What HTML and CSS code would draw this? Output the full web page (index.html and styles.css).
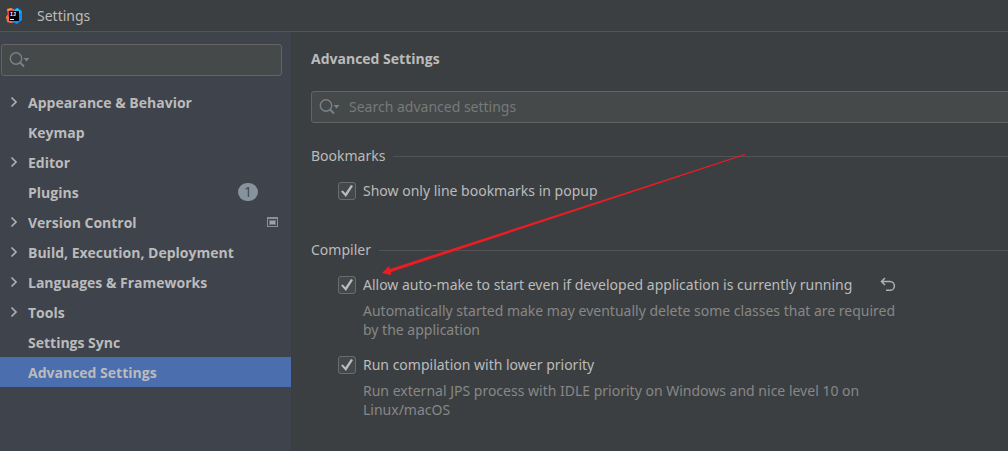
FILE: index.html
```html
<!DOCTYPE html>
<html lang="en">
<head>
<meta charset="utf-8">
<meta name="viewport" content="width=device-width, initial-scale=1">
<title>Settings</title>
<link rel="stylesheet" href="styles.css">
</head>
<body>
<svg class="defs" aria-hidden="true">
  <symbol id="chevron" viewBox="0 0 8 12"><path d="M1.5 1.5 6 6 1.5 10.5" fill="none" stroke="currentColor" stroke-width="1.7"/></symbol>
  <symbol id="search" viewBox="0 0 22 18"><circle cx="7" cy="7.5" r="5.7" fill="none" stroke="currentColor" stroke-width="1.4"/><path d="m11 11.5 4 4" stroke="currentColor" stroke-width="1.8"/><path d="M14.5 7h6l-3 3.5z" fill="currentColor"/></symbol>
</svg>
<header class="titlebar">
  <svg class="logo" viewBox="0 0 16 16" aria-hidden="true">
    <path d="M1 1 5 0l4 2-5 6-3 5-1-4 2-3z" fill="#f7a32b"/>
    <path d="m2 3 5-2 2 4-5 8-3 1z" fill="#f0316d"/>
    <path d="m1 9 4-1 4 6-4 1-4-1z" fill="#fc6a55"/>
    <path d="m9 1 3-1 4 3v9l-5 4-5-2z" fill="#0d8cf5"/>
    <path d="m11 0 4 4-2 2-5-3z" fill="#22c4f5"/>
    <path d="M3 3h10v10H3z" fill="#080008"/>
    <text class="logo-text" x="4" y="8">IJ</text>
    <path d="M4 11.5h4" stroke="#fff"/>
  </svg>
  <span>Settings</span>
</header>
<div class="body">
  <nav class="sidebar" aria-label="Settings categories">
    <label class="search side-search"><svg class="search-icon" aria-hidden="true"><use href="#search"/></svg><input type="search" aria-label="Search settings"></label>
    <ul class="tree">
      <li><a class="row" href="#"><svg class="chevron"><use href="#chevron"/></svg><span class="name">Appearance &amp; Behavior</span></a></li>
      <li><a class="row" href="#"><span class="name">Keymap</span></a></li>
      <li><a class="row" href="#"><svg class="chevron"><use href="#chevron"/></svg><span class="name">Editor</span></a></li>
      <li><a class="row" href="#"><span class="name">Plugins</span><span class="badge">1</span></a></li>
      <li><a class="row" href="#"><svg class="chevron"><use href="#chevron"/></svg><span class="name">Version Control</span><svg class="project" viewBox="0 0 11 10"><path fill="#87939a" fill-rule="evenodd" d="M0 0h11v10H0zM1 2v7h9V2z"/><path fill="#6b767e" d="M2 3h7v5H2z"/><path fill="#99a5ad" d="M3 4h5v3H3z"/></svg></a></li>
      <li><a class="row" href="#"><svg class="chevron"><use href="#chevron"/></svg><span class="name">Build, Execution, Deployment</span></a></li>
      <li><a class="row" href="#"><svg class="chevron"><use href="#chevron"/></svg><span class="name">Languages &amp; Frameworks</span></a></li>
      <li><a class="row" href="#"><svg class="chevron"><use href="#chevron"/></svg><span class="name">Tools</span></a></li>
      <li><a class="row" href="#"><span class="name">Settings Sync</span></a></li>
      <li><a class="row selected" href="#" aria-current="page"><span class="name">Advanced Settings</span></a></li>
    </ul>
  </nav>
  <main class="content">
    <h1 class="heading">Advanced Settings</h1>
    <label class="search"><svg class="search-icon" aria-hidden="true"><use href="#search"/></svg><input type="search" aria-label="Search advanced settings" placeholder="Search advanced settings"></label>
    <section class="group">
      <h2 class="group-title">Bookmarks</h2>
      <div class="option"><input class="check" type="checkbox" id="line" checked><label for="line">Show only line bookmarks in popup</label></div>
    </section>
    <section class="group">
      <h2 class="group-title">Compiler</h2>
      <div class="option"><input class="check" type="checkbox" id="auto" checked><label for="auto">Allow auto-make to start even if developed application is currently running</label><button class="reset" type="button" aria-label="Reset to default"><svg viewBox="0 0 16 16"><path d="M5 1 1.5 4.5 5 8M1.5 4.5H10a4.4 4.4 0 0 1 0 8.8H6" fill="none" stroke="currentColor" stroke-width="1.5"/></svg></button></div>
      <p class="hint">Automatically started make may eventually delete some classes that are required by the application</p>
      <div class="option"><input class="check" type="checkbox" id="low" checked><label for="low">Run compilation with lower priority</label></div>
      <p class="hint">Run external JPS process with IDLE priority on Windows and nice level 10 on Linux/macOS</p>
    </section>
  </main>
</div>
<svg class="arrow" viewBox="0 0 364 122" aria-hidden="true"><path d="M0 119 7 112 8 115 363 0 363 1 9 118 9 121z" fill="#ed1c24"/></svg>
</body>
</html>
```
FILE: styles.css
```css
* { box-sizing: border-box; }
body {
  margin: 0;
  min-height: 100vh;
  display: flex;
  flex-direction: column;
  position: relative;
  overflow-x: hidden;
  background: #3c3f41;
  color: #bbbbbb;
  font: 14px/20px "Noto Sans", "Open Sans", sans-serif;
}
.defs { position: absolute; width: 0; height: 0; }
.titlebar {
  display: flex;
  align-items: center;
  gap: 15px;
  height: 32px;
  padding-left: 6px;
  border-bottom: 1px solid #515456;
}
.logo { width: 16px; height: 16px; }
.logo-text { font: bold 5px "Liberation Mono", monospace; fill: #fff; }
.body { display: flex; flex: 1; }
.sidebar {
  flex: none;
  width: 291px;
  padding-top: 12px;
  background: #3f434c;
}
.search {
  display: flex;
  align-items: center;
  height: 32px;
  padding: 0 7px;
  gap: 8px;
  background: #45494a;
  border: 1px solid #646464;
  border-radius: 3px;
}
.side-search { margin: 0 9px 0 1px; }
.search-icon { flex: none; width: 22px; height: 18px; color: #78848c; }
.search input {
  flex: 1;
  min-width: 0;
  padding: 0;
  border: 0;
  outline: 0;
  background: none;
  color: inherit;
  font: inherit;
}
.search input::placeholder { color: #777a7b; opacity: 1; }
.tree { list-style: none; margin: 11px 0 0; padding: 0; }
.row {
  display: grid;
  grid-template-columns: 8px 1fr auto;
  column-gap: 10px;
  align-items: center;
  height: 30px;
  padding: 0 13px 0 10px;
  color: #bbbbbb;
  font-family: "Open Sans", "Noto Sans", sans-serif;
  font-weight: bold;
  text-decoration: none;
}
.selected { background: #4b6eaf; }
.chevron { grid-column: 1; width: 8px; height: 12px; color: #adb0b3; }
.name { grid-column: 2; padding-top: 1px; }
.badge {
  margin-right: 20px;
  width: 20px;
  height: 18px;
  border-radius: 9px;
  background: #87939a;
  color: #3f434c;
  font-weight: normal;
  line-height: 18px;
  text-align: center;
}
.project { width: 11px; height: 10px; }
.content { flex: 1; min-width: 0; padding: 17px 0 0 20px; }
.heading {
  margin: 0 0 22px;
  font-family: "Open Sans", "Noto Sans", sans-serif;
  font-size: 14px;
  line-height: 20px;
}
.content .search { margin-right: -8px; }
.group { padding-top: 23px; }
.group + .group { padding-top: 39px; }
.group-title {
  display: flex;
  align-items: center;
  gap: 8px;
  margin: 0 0 15px;
  font-size: 14px;
  font-weight: normal;
  line-height: 20px;
}
.group-title::after { content: ""; flex: 1; height: 1px; background: #515354; }
.option { display: flex; align-items: center; height: 20px; padding-left: 27px; }
.check {
  appearance: none;
  flex: none;
  width: 18px;
  height: 18px;
  margin: 0 7px 0 0;
  display: grid;
  place-items: center;
  border: 1px solid #6b6b6b;
  border-radius: 3px;
  background: #43494a;
}
.check:checked::before {
  content: "";
  width: 12px;
  height: 12px;
  background: #bbbbbb;
  clip-path: polygon(0 55%, 15% 45%, 37% 68%, 83% 0, 100% 9%, 41% 100%);
}
.reset { margin-left: 28px; padding: 0; border: 0; background: none; color: #afb1b3; }
.reset svg { display: block; width: 16px; height: 16px; }
.hint {
  max-width: 600px;
  margin: 6px 0 16px;
  padding-left: 52px;
  color: #878787;
  line-height: 19px;
}
.arrow { position: absolute; left: 382px; top: 154px; width: 364px; height: 122px; pointer-events: none; }
```
